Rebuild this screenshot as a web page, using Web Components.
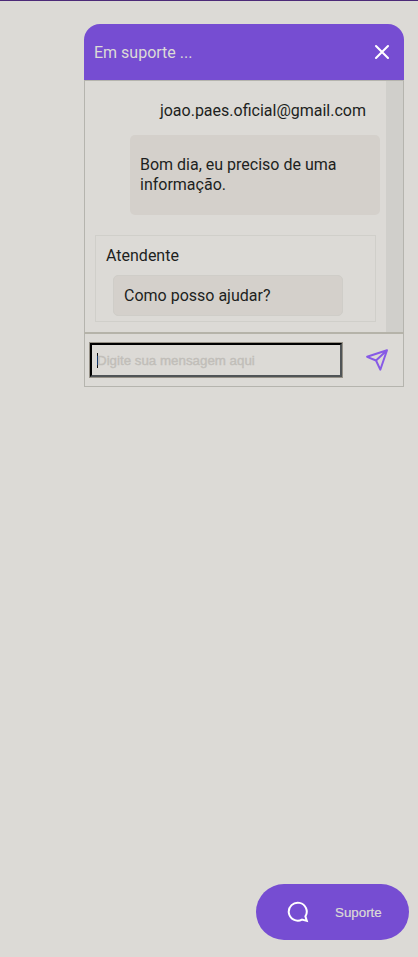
<!DOCTYPE html>
<html lang="pt-BR">
<head>
<meta charset="utf-8">
<title>Suporte</title>
<style>
html,body{height:100%}
body{margin:0;background:#dcdad6;font-family:Roboto,sans-serif;font-size:16px;line-height:20px;color:#1d1f21;overflow:hidden}
</style>
</head>
<body>
<support-page>
<chat-window heading="Em suporte ...">
<chat-message variant="own" author="joao.paes.oficial@gmail.com">Bom dia, eu preciso de uma informação.</chat-message>
<chat-message variant="agent" author="Atendente">Como posso ajudar?</chat-message>
<chat-composer slot="footer" hint="Digite sua mensagem aqui"></chat-composer>
</chat-window>
<support-button slot="launcher">Suporte</support-button>
</support-page>
<script>
class Base extends HTMLElement{
  constructor(){
    super();
    this.attachShadow({mode:'open'}).innerHTML='<style>*{box-sizing:border-box}:host{box-sizing:border-box}</style>'+this.view();
  }
}
customElements.define('support-page',class extends Base{
  view(){return `<style>
:host{display:flex;flex-direction:column;justify-content:space-between;align-items:flex-end;height:100vh;padding:23px 0 17px;border-top:1px solid #4c2a78}
</style><slot></slot><slot name="launcher"></slot>`}
});
customElements.define('chat-window',class extends Base{
  view(){return `<style>
:host{display:flex;flex-direction:column;width:320px;margin-right:14px}
header{height:56px;display:flex;align-items:center;justify-content:space-between;padding:0 14px 0 10px;background:#764dd2;color:#dcdbd6;border-radius:16px 16px 0 0}
header span{padding-top:2px}
header svg{display:block}
main{display:flex;height:253px;border:1px solid #b5b4ae;border-bottom-color:#b5b3a9}
.list{flex:1;display:flex;flex-direction:column;min-width:0}
.track{width:17px;background:#d0cfcb}
</style><header><span>${this.getAttribute('heading')}</span>
<svg width="16" height="16" viewBox="0 0 16 16" fill="none" stroke="#fff" stroke-width="2.1" stroke-linecap="round"><path d="M2 2 14 14M14 2 2 14"/></svg></header>
<main><div class="list"><slot></slot></div><div class="track"></div></main><slot name="footer"></slot>`}
});
customElements.define('chat-message',class extends Base{
  view(){return `<style>
:host{display:flex;flex-direction:column}
.bubble{background:#d4d0cb;border-radius:5px}
:host([variant=own]){align-items:flex-end;padding:20px 6px 0 0}
:host([variant=own]) .author{margin:0 14px 14px 0}
:host([variant=own]) .bubble{width:250px;height:80px;padding:20px 10px}
:host([variant=agent]){width:281px;height:87px;margin:20px 0 0 10px;padding:10px 0 0;border:1px solid #d0cfca}
:host([variant=agent]) .author{margin-left:10px}
:host([variant=agent]) .bubble{width:230px;height:41px;margin:9px 0 0 17px;padding:10px;border:1px solid #cfcdc8}
</style><div class="author">${this.getAttribute('author')}</div><div class="bubble"><slot></slot></div>`}
});
customElements.define('chat-composer',class extends Base{
  view(){return `<style>
:host{display:flex;align-items:center;justify-content:space-between;height:54px;padding:0 14px 0 4px;border:1px solid #b5b4ae;border-top-color:#b5b3a9}
.field{display:flex;align-items:center;width:254px;height:36px;border:1px solid #969187}
.inner{display:flex;align-items:center;width:252px;height:34px;padding-left:5px;border:2px solid;border-color:#000 #505457 #505457 #000}
.caret{width:1px;height:15px;margin-right:-1px;background:#111}
.hint{font:13.333px/15px "Liberation Sans",Arial,sans-serif;color:#c1beb9;-webkit-text-stroke:.4px #c1beb9;white-space:nowrap}
svg{display:block}
</style><div class="field"><div class="inner"><i class="caret"></i><span class="hint">${this.getAttribute('hint')}</span></div></div>
<svg width="24" height="24" viewBox="0 0 24 24" fill="none" stroke="#875ae6" stroke-width="2" stroke-linejoin="round"><path d="M22 2.2 2.1 8.8 11 12.5 15.3 21.7ZM11 12.5 22 2.2"/></svg>`}
});
customElements.define('support-button',class extends Base{
  view(){return `<style>
:host{display:flex;align-items:center;width:153px;height:56px;margin-right:9px;padding-left:31px;gap:26px;border-radius:28px;background:#764dd2;color:#dcdbd6;font:13.333px/16px "Liberation Sans",Arial,sans-serif}
svg{display:block;flex:none}
span{padding-top:2px;-webkit-text-stroke:.2px #dcdbd6}
</style><svg width="22" height="22" viewBox="0 0 22 22" fill="none" stroke="#fff" stroke-width="2" stroke-linejoin="miter"><path d="M18.4 15.4A9 9 0 1 0 15 18.6L19.8 19.9Z"/></svg><span><slot></slot></span>`}
});
</script>
</body>
</html>
